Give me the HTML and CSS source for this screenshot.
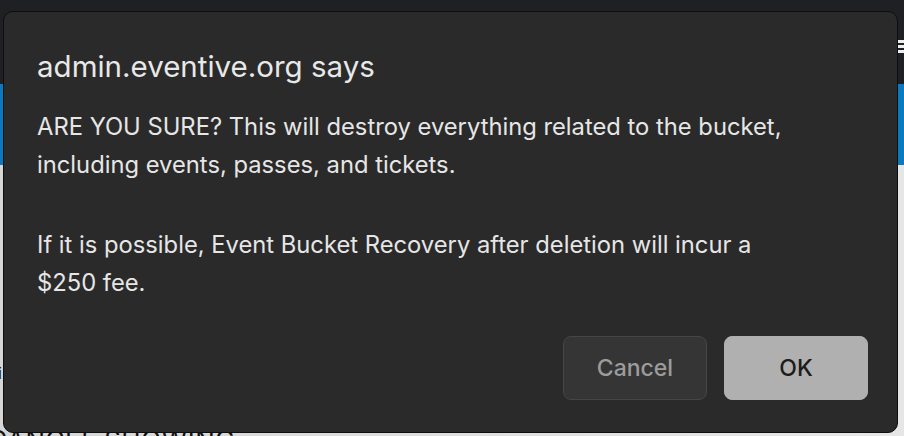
FILE: index.html
```html
<!DOCTYPE html>
<html lang="en">
	<head>
		<meta charset="UTF-8" />
		<meta name="viewport" content="width=device-width, initial-scale=1.0" />
		<title>admin.eventive.org</title>
		<link rel="stylesheet" href="styles.css">
	</head>
	<body>
		<div class="page">
			<header class="topbar">
				<span class="menu-icon"></span>
			</header>
			<div class="hero"></div>
			<main class="content">
				<p class="content-note">i</p>
				<h2 class="content-title">CANCEL SHOWING</h2>
			</main>
		</div>

		<div class="dialog">
			<h1 class="dialog-title">admin.eventive.org says</h1>
			<div class="dialog-message">
				<p>ARE YOU SURE? This will destroy everything related to the bucket, including events, passes, and tickets.</p>
				<p>If it is possible, Event Bucket Recovery after deletion will incur a $250 fee.</p>
			</div>
			<div class="dialog-actions">
				<button class="btn btn-cancel">Cancel</button>
				<button class="btn btn-ok">OK</button>
			</div>
		</div>
	</body>
</html>
```

FILE: styles.css
```css
body {
	margin: 0;
	height: 436px;
	overflow: hidden;
	font-family: Inter, "Liberation Sans", sans-serif;
	background: #dcdcdc;
}
.page {
	display: flex;
	flex-direction: column;
	height: 100%;
}
.topbar {
	flex-shrink: 0;
	height: 84px;
	background: #1f2023;
	display: flex;
	justify-content: flex-end;
	padding-top: 40px;
	box-sizing: border-box;
}
.menu-icon {
	width: 12px;
	height: 13px;
	background: linear-gradient(#eee 0 3px, transparent 3px 5px, #eee 5px 8px, transparent 8px 10px, #eee 10px 13px);
	margin-right: -6px;
}
.hero {
	flex-shrink: 0;
	height: 81px;
	background: #0a7ac0;
}
.content {
	flex: 1;
	min-height: 0;
	background: linear-gradient(90deg, #d6d6d6, #e6e6e6);
	padding-left: 6px;
}
.content-note {
	margin: 198px 0 0 -8px;
	font-size: 16px;
	line-height: 20px;
	color: #111;
}
.content-title {
	margin: 40px 0 0 -18px;
	font-size: 26px;
	line-height: 34px;
	font-weight: 400;
	color: #111;
	letter-spacing: 0.5px;
	white-space: nowrap;
}

.dialog {
	position: absolute;
	left: 3px;
	top: 11px;
	width: 895px;
	height: 422px;
	box-sizing: border-box;
	background: #2a2a2a;
	border: 1px solid #0e0e0e;
	border-radius: 10px;
	padding: 36px 29px 32px 33px;
	display: flex;
	flex-direction: column;
	color: #e8e8e8;
}
.dialog-title {
	margin: 0;
	font-size: 29.5px;
	font-weight: 400;
	line-height: 36px;
}
.dialog-message {
	margin-top: 24px;
	max-width: 762px;
	font-size: 23.75px;
	line-height: 38px;
	color: #e6e6e6;
}
.dialog-message p {
	margin: 0 0 42px;
}
.dialog-message p:last-child {
	margin-bottom: 0;
}
.dialog-actions {
	margin-top: auto;
	display: flex;
	justify-content: flex-end;
	gap: 17px;
}
.btn {
	width: 144px;
	height: 64px;
	border-radius: 8px;
	font-family: inherit;
	font-size: 23px;
	font-weight: 500;
}
.btn-cancel {
	background: #353535;
	border: 1px solid #464646;
	color: #9c9c9c;
}
.btn-ok {
	background: #b0b0b0;
	border: 1px solid #b0b0b0;
	color: #1c1c1c;
}
```
